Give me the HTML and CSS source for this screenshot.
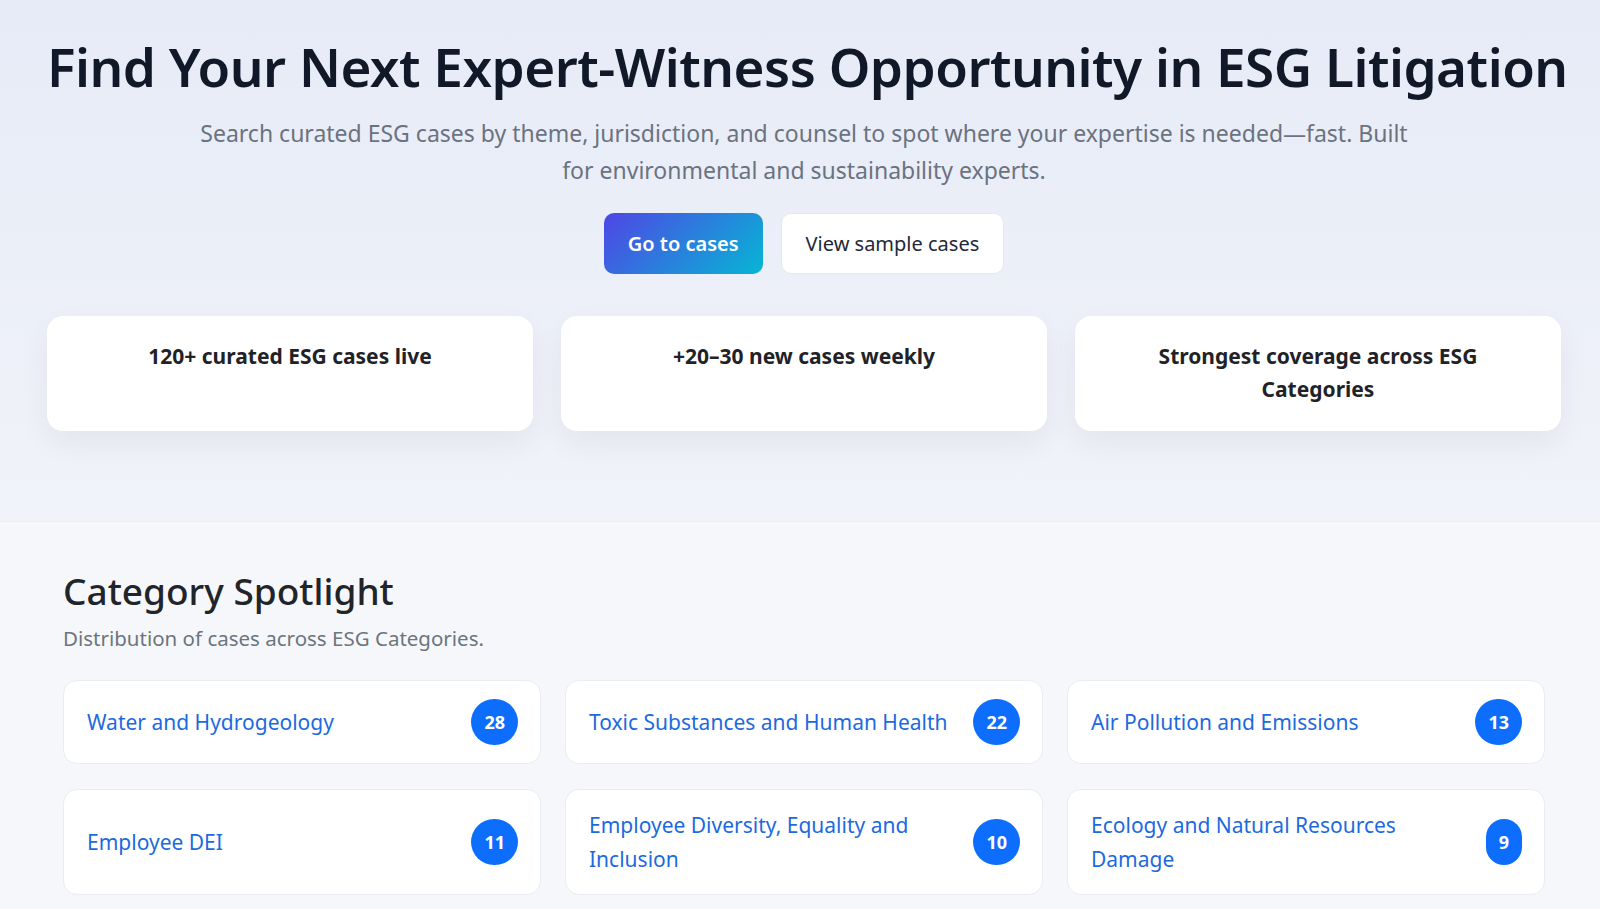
FILE: index.html
```html
<!DOCTYPE html>
<html lang="en">
<head>
  <meta charset="UTF-8">
  <title>ESG Litigation Expert Opportunities</title>
  <link rel="stylesheet" href="styles.css">
</head>
<body>
  <section class="hero">
    <h1>Find Your Next Expert-Witness Opportunity in ESG Litigation</h1>
    <p class="lead">Search curated ESG cases by theme, jurisdiction, and counsel to spot where your expertise is needed—fast. Built for environmental and sustainability experts.</p>

    <div class="actions">
      <a class="btn btn-go" href="#cases">Go to cases</a>
      <a class="btn btn-sample" href="#sample">View sample cases</a>
    </div>

    <div class="stats">
      <div class="stat">120+ curated ESG cases live</div>
      <div class="stat">+20–30 new cases weekly</div>
      <div class="stat">Strongest coverage across ESG Categories</div>
    </div>
  </section>

  <section class="spotlight">
    <h2>Category Spotlight</h2>
    <p class="muted">Distribution of cases across ESG Categories.</p>

    <div class="cat-grid">
      <a class="cat" href="#"><span class="cat-name">Water and Hydrogeology</span><span class="count">28</span></a>
      <a class="cat" href="#"><span class="cat-name">Toxic Substances and Human Health</span><span class="count">22</span></a>
      <a class="cat" href="#"><span class="cat-name">Air Pollution and Emissions</span><span class="count">13</span></a>
      <a class="cat" href="#"><span class="cat-name">Employee DEI</span><span class="count">11</span></a>
      <a class="cat" href="#"><span class="cat-name">Employee Diversity, Equality and Inclusion</span><span class="count">10</span></a>
      <a class="cat" href="#"><span class="cat-name">Ecology and Natural Resources Damage</span><span class="count">9</span></a>
    </div>
  </section>
</body>
</html>
```

FILE: styles.css
```css
body {
  margin: 0;
  font-family: "Noto Sans", "Open Sans", sans-serif;
  background: #f6f7fb;
  color: #212529;
}

.hero {
  padding: 33px 39px 90px 47px;
  text-align: center;
  background: linear-gradient(180deg, #e6ebf7 0%, #f1f3f9 100%);
  border-bottom: 1px solid #eceef4;
}
.hero h1 {
  margin: 0;
  font-size: 53px;
  font-weight: 600;
  letter-spacing: -0.5px;
  line-height: 1.3;
  white-space: nowrap;
  color: #111827;
}
.lead {
  max-width: 1225px;
  margin: 13px auto 0;
  font-size: 23px;
  line-height: 37px;
  color: #6b7280;
}

.actions {
  display: flex;
  justify-content: center;
  gap: 18px;
  margin-top: 24px;
}
.btn {
  display: inline-block;
  padding: 0 24px;
  height: 61px;
  line-height: 61px;
  font-size: 20px;
  border-radius: 10px;
  text-decoration: none;
  box-sizing: border-box;
}
.btn-go {
  background: linear-gradient(135deg, #4f46e5 0%, #06b6d4 100%);
  color: #fff;
  font-weight: 600;
}
.btn-sample {
  background: #fff;
  color: #1f2937;
  border: 1px solid #e5e7eb;
  line-height: 59px;
}

.stats {
  display: grid;
  grid-template-columns: repeat(3, 1fr);
  gap: 28px;
  margin-top: 42px;
}
.stat {
  background: #fff;
  border-radius: 16px;
  min-height: 115px;
  box-sizing: border-box;
  padding: 24px 60px;
  font-size: 21px;
  font-weight: 700;
  line-height: 33px;
  color: #1f2328;
  box-shadow: 0 12px 30px rgba(30, 41, 80, 0.06);
}

.spotlight {
  padding: 47px 55px 40px 63px;
}
.spotlight h2 {
  margin: 0;
  font-size: 37px;
  font-weight: 500;
  line-height: 1.2;
  color: #212529;
}
.muted {
  margin: 11px 0 0;
  font-size: 20.5px;
  line-height: 28px;
  color: #6c757d;
}

.cat-grid {
  display: grid;
  grid-template-columns: repeat(3, 1fr);
  gap: 25px 24px;
  margin-top: 28px;
}
.cat {
  display: flex;
  align-items: center;
  justify-content: space-between;
  gap: 16px;
  padding: 18px 22px 18px 23px;
  background: #fff;
  border: 1px solid #e9ecf1;
  border-radius: 14px;
  text-decoration: none;
  color: #1d6ade;
  font-size: 21px;
  line-height: 34px;
}
.count {
  flex-shrink: 0;
  padding: 12px 13px;
  border-radius: 50rem;
  background: #0d6efd;
  color: #fff;
  font-size: 18px;
  font-weight: 700;
  line-height: 22px;
  text-align: center;
}
```
